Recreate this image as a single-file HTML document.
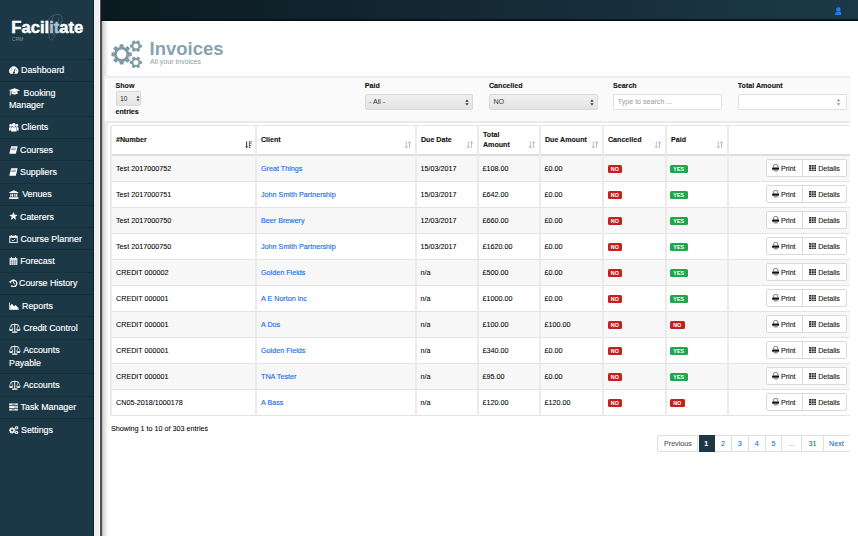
<!DOCTYPE html><html><head><meta charset="utf-8"><style>
*{margin:0;padding:0;box-sizing:border-box}
html,body{width:858px;height:536px;overflow:hidden;background:#fff;font-family:"Liberation Sans", sans-serif;color:#222}
.a{position:absolute}
#sb{left:0;top:0;width:94px;height:536px;background:#1c3846}
#sbl{left:92.8px;top:0;width:1.8px;height:536px;background:#0b2230}
#strip{left:94px;top:0;width:6px;height:536px;background:#efefef}
#strip2{left:99px;top:0;width:1px;height:536px;background:#fbfbfb}
#dl{left:100px;top:0;width:1.8px;height:536px;background:#505050}
#shadow{left:101.8px;top:20.6px;width:7.5px;height:516px;background:linear-gradient(to right,#bdbdbd,#e6e6e6 40%,#fff)}
#top{left:101px;top:0;width:757px;height:20.5px;background:linear-gradient(to right,#0c1a21,#1c3947)}
#topl{left:101px;top:19.4px;width:757px;height:1.2px;background:#06131a}
.mi{left:0;width:93px;border-top:1px solid #152e3a;color:#fff;font-size:8.85px;line-height:12.7px;-webkit-text-stroke:0.15px #fff}
.mi .t{position:absolute;left:9px;top:4.8px;width:84px}
.ic{display:inline-block;width:9px;height:8px;vertical-align:-1px;margin-right:3px}
.lbl{font-size:7.1px;font-weight:bold;color:#111;-webkit-text-stroke:0.1px #111}
.sel{border:1px solid #d8d8d8;border-radius:2px;background:linear-gradient(#f0f0f0,#e4e4e4);font-size:7.1px;color:#333;box-shadow:0 1px 0 #fff}
.inp{border:1px solid #dde3e5;border-radius:1px;background:#fff;font-size:7.1px;color:#999}
.cb{top:125px;width:1.8px;height:290.5px;background:#ebebeb}
.rowb{left:111px;width:739px;height:1px;background:#e3e3e3}
.stripe{left:111px;width:739px;height:26px;background:#f7f7f7}
.c{font-size:7.2px;color:#000;white-space:nowrap;-webkit-text-stroke:0.06px #000;transform:scaleY(1.1);transform-origin:0 6.5px}
.lk{color:#166de4;-webkit-text-stroke:0.12px #166de4}
.hd{font-size:7.1px;font-weight:bold;color:#111;line-height:10.4px;-webkit-text-stroke:0.1px #111}
.bd{width:14.5px;height:8px;border-radius:1.5px;color:#fff;font-size:5.4px;font-weight:bold;text-align:center;line-height:8.2px}
.no{background:#c3201e}
.yes{background:#20a64c}
.bg{width:80.7px;height:18px;border:1px solid #d9d9d9;border-radius:2px;background:#fff}
.bg .dv{position:absolute;left:34.7px;top:0;width:1px;height:16px;background:#d9d9d9}
.bt{position:absolute;top:5.0px;font-size:7.1px;color:#222;white-space:nowrap;-webkit-text-stroke:0.12px #222}
.pg{top:434.7px;height:17px;border:1px solid #dedede;border-left:none;font-size:7.1px;color:#1a6fd8;text-align:center;line-height:16.4px;-webkit-text-stroke:0.1px currentColor}
</style></head><body><div id="sb" class="a"></div>
<svg class="a" style="left:41px;top:10px" width="26" height="34" viewBox="0 0 26 34"><path d="M15 4.5Q20 3 21 8Q21.5 12 17 20Q13 28 11 30Q9 31 8 27Q7 22 9 15Q11 6 15 4.5Z" stroke="#3d5e6e" stroke-width="0.9" fill="none"/><path d="M17 7Q19 10 15 19Q12 26 10.5 26" stroke="#3d5e6e" stroke-width="0.8" fill="none"/><path d="M6 11Q9 6 13 5M19 24Q21 20 22 14" stroke="#3d5e6e" stroke-width="0.8" fill="none"/></svg>
<div class="a" style="left:11.3px;top:18.1px;font-size:16.6px;font-weight:bold;color:#fff;letter-spacing:0px;white-space:nowrap;-webkit-text-stroke:0.5px #fff">Facil<span style="color:#a8c6d1;-webkit-text-stroke:0.5px #a8c6d1">it</span>ate</div>

<div class="a" style="left:12px;top:36.5px;font-size:4.8px;color:#7f98a4;letter-spacing:0.2px">CRM</div>
<div class="a mi" style="top:58.50px;height:22.30px"><div class="t"><svg class="ic" style="width:9.5px;height:8px;vertical-align:-1.2px;margin-right:2.5px" viewBox="0 0 10 8.5"><path d="M1.2 8.2A4.8 4.8 0 1 1 8.8 8.2Z" fill="#fff"/><path d="M5 7.4L6.6 2.8" stroke="#1d3746" stroke-width="0.9"/><circle cx="5" cy="7.2" r="1" fill="#1d3746"/><circle cx="2.2" cy="5" r="0.5" fill="#1d3746"/><circle cx="3" cy="2.6" r="0.5" fill="#1d3746"/><circle cx="7.8" cy="5" r="0.5" fill="#1d3746"/></svg>Dashboard</div></div>
<div class="a mi" style="top:80.80px;height:34.80px"><div class="t"><svg class="ic" style="width:11px;height:8px;margin-right:3.5px;vertical-align:-0.8px" viewBox="0 0 11 8"><path d="M0 2.3L5.5 0.2L11 2.3L5.5 4.4Z" fill="#fff"/><path d="M2.4 3.5V5.8Q5.5 7.3 8.6 5.8V3.5L5.5 4.8Z" fill="#fff"/><path d="M1.3 2.6V7.6" stroke="#fff" stroke-width="0.8"/></svg>Booking<br>Manager</div></div>
<div class="a mi" style="top:115.60px;height:22.30px"><div class="t"><svg class="ic" style="width:9.6px;height:8.6px;vertical-align:-1.6px;margin-right:2.6px" viewBox="0 0 9.6 8.6"><circle cx="4.8" cy="2" r="1.9" fill="#fff"/><circle cx="1.7" cy="2.4" r="1.35" fill="#fff"/><circle cx="7.9" cy="2.4" r="1.35" fill="#fff"/><path d="M2 8.6V5.9Q2.2 4.3 3.4 4.1Q4.8 5 6.2 4.1Q7.4 4.3 7.6 5.9V8.6Z" fill="#fff"/><path d="M0 7.4V5.3Q0.2 4 1 3.9Q1.7 4.4 2.6 4.1Q1.8 4.8 1.7 6.2V7.4Z" fill="#fff"/><path d="M9.6 7.4V5.3Q9.4 4 8.6 3.9Q7.9 4.4 7 4.1Q7.8 4.8 7.9 6.2V7.4Z" fill="#fff"/></svg>Clients</div></div>
<div class="a mi" style="top:137.90px;height:22.30px"><div class="t"><svg class="ic" style="margin-right:2px" viewBox="0 0 9 8"><path d="M2.2 0.3H8.7L6.8 7.7H0.3Z" fill="#fff"/><path d="M2.6 2.2H7M2.2 3.6H6.6" stroke="#1d3746" stroke-width="0.5"/></svg>Courses</div></div>
<div class="a mi" style="top:160.20px;height:22.30px"><div class="t"><svg class="ic" style="margin-right:2px" viewBox="0 0 9 8"><path d="M2.2 0.3H8.7L6.8 7.7H0.3Z" fill="#fff"/><path d="M2.6 2.2H7M2.2 3.6H6.6" stroke="#1d3746" stroke-width="0.5"/></svg>Suppliers</div></div>
<div class="a mi" style="top:182.50px;height:22.30px"><div class="t"><svg class="ic" style="width:9.6px;height:9.4px;vertical-align:-1.8px;margin-right:3.6px" viewBox="0 0 9 8.8"><path d="M0.3 2.2L4.5 0.2L8.7 2.2V2.9H0.3Z" fill="#fff"/><path d="M1.2 3.4H2.3V6.4H1.2ZM2.9 3.4H4V6.4H2.9ZM5 3.4H6.1V6.4H5ZM6.7 3.4H7.8V6.4H6.7Z" fill="#fff"/><path d="M0.2 6.8H8.8V8.6H0.2Z" fill="#fff"/></svg>Venues</div></div>
<div class="a mi" style="top:204.80px;height:22.30px"><div class="t"><svg class="ic" style="margin-right:2px;vertical-align:-0.5px" viewBox="0 0 9 8"><path d="M4.5 0.1L5.6 2.8L8.7 2.9L6.3 4.8L7.1 7.9L4.5 6.1L1.9 7.9L2.7 4.8L0.3 2.9L3.4 2.8Z" fill="#fff"/></svg>Caterers</div></div>
<div class="a mi" style="top:227.10px;height:22.30px"><div class="t"><svg class="ic" style="margin-right:2.4px;height:8.6px;vertical-align:-1.4px" viewBox="0 0 9 8.6"><rect x="0.8" y="1.2" width="7.4" height="6.4" fill="none" stroke="#fff" stroke-width="0.9"/><path d="M0.8 1.2H8.2V2.8H0.8Z" fill="#fff"/><path d="M2.5 0V1.6M6.5 0V1.6" stroke="#fff" stroke-width="0.9"/><path d="M2.8 4.9L4 6L6.2 3.8" stroke="#fff" stroke-width="0.8" fill="none"/></svg>Course Planner</div></div>
<div class="a mi" style="top:249.40px;height:22.30px"><div class="t"><svg class="ic" style="margin-right:2.2px;height:8.6px;vertical-align:-1.4px" viewBox="0 0 9 8.6"><rect x="0.6" y="1.2" width="7.8" height="6.6" fill="#fff"/><path d="M2.5 0V1.6M6.5 0V1.6" stroke="#fff" stroke-width="0.9"/><path d="M0.6 3H8.4M0.6 4.6H8.4M0.6 6.2H8.4M2.6 3V7.8M4.5 3V7.8M6.4 3V7.8" stroke="#1d3746" stroke-width="0.35"/></svg>Forecast</div></div>
<div class="a mi" style="top:271.70px;height:22.30px"><div class="t"><svg class="ic" style="margin-right:1px" viewBox="0 0 9 8"><path d="M1.8 2.8A3.2 3.2 0 1 1 2.2 6.5" fill="none" stroke="#fff" stroke-width="1.3"/><path d="M0 2.2L2.6 2.4L1.4 4.6Z" fill="#fff"/><path d="M4.6 2V4.2L6 5.2" stroke="#fff" stroke-width="0.9" fill="none"/></svg>Course History</div></div>
<div class="a mi" style="top:294.00px;height:22.30px"><div class="t"><svg class="ic" style="width:10px" viewBox="0 0 10 8"><path d="M0.4 0.5V7.6H9.8" stroke="#fff" stroke-width="0.8" fill="none"/><path d="M1.2 7.2V3.5L3 1.8L5 4.2L6.6 3L9.6 6.2V7.2Z" fill="#fff"/></svg>Reports</div></div>
<div class="a mi" style="top:316.30px;height:22.30px"><div class="t"><svg class="ic" style="width:11.5px;height:10px;vertical-align:-2px;margin-right:2.7px" viewBox="0 0 12 10"><path d="M6 0.6V9M2.2 1.8Q6 0.6 9.8 1.8" stroke="#fff" stroke-width="1" fill="none"/><path d="M3.2 9.3H8.8" stroke="#fff" stroke-width="1.3"/><path d="M2.2 1.8L0.4 6.4M2.2 1.8L4 6.4M9.8 1.8L8 6.4M9.8 1.8L11.6 6.4" stroke="#fff" stroke-width="0.6" fill="none"/><path d="M0 6.2H4.4Q4.2 8.2 2.2 8.2Q0.2 8.2 0 6.2ZM7.6 6.2H12Q11.8 8.2 9.8 8.2Q7.8 8.2 7.6 6.2Z" fill="#fff"/></svg>Credit Control</div></div>
<div class="a mi" style="top:338.60px;height:34.80px"><div class="t"><svg class="ic" style="width:11.5px;height:10px;vertical-align:-2px;margin-right:2.7px" viewBox="0 0 12 10"><path d="M6 0.6V9M2.2 1.8Q6 0.6 9.8 1.8" stroke="#fff" stroke-width="1" fill="none"/><path d="M3.2 9.3H8.8" stroke="#fff" stroke-width="1.3"/><path d="M2.2 1.8L0.4 6.4M2.2 1.8L4 6.4M9.8 1.8L8 6.4M9.8 1.8L11.6 6.4" stroke="#fff" stroke-width="0.6" fill="none"/><path d="M0 6.2H4.4Q4.2 8.2 2.2 8.2Q0.2 8.2 0 6.2ZM7.6 6.2H12Q11.8 8.2 9.8 8.2Q7.8 8.2 7.6 6.2Z" fill="#fff"/></svg>Accounts<br>Payable</div></div>
<div class="a mi" style="top:373.40px;height:22.30px"><div class="t"><svg class="ic" style="width:11.5px;height:10px;vertical-align:-2px;margin-right:2.7px" viewBox="0 0 12 10"><path d="M6 0.6V9M2.2 1.8Q6 0.6 9.8 1.8" stroke="#fff" stroke-width="1" fill="none"/><path d="M3.2 9.3H8.8" stroke="#fff" stroke-width="1.3"/><path d="M2.2 1.8L0.4 6.4M2.2 1.8L4 6.4M9.8 1.8L8 6.4M9.8 1.8L11.6 6.4" stroke="#fff" stroke-width="0.6" fill="none"/><path d="M0 6.2H4.4Q4.2 8.2 2.2 8.2Q0.2 8.2 0 6.2ZM7.6 6.2H12Q11.8 8.2 9.8 8.2Q7.8 8.2 7.6 6.2Z" fill="#fff"/></svg>Accounts</div></div>
<div class="a mi" style="top:395.70px;height:22.30px"><div class="t"><svg class="ic" style="width:9px;margin-right:2.6px" viewBox="0 0 9 8"><path d="M0.2 0.4H8.8V2.2H0.2ZM0.2 3.1H8.8V4.9H0.2ZM0.2 5.8H8.8V7.6H0.2Z" fill="#fff"/><path d="M3 1.3H6.5M5.2 4H8M2.6 6.7H6" stroke="#1c3846" stroke-width="0.6"/></svg>Task Manager</div></div>
<div class="a mi" style="top:418.00px;height:22.30px"><div class="t"><svg class="ic" style="width:9.6px;height:8.6px;vertical-align:-1.4px;margin-right:2.4px" viewBox="0 0 9.6 8.6"><path d="M5.46 3.58L6.33 3.73L6.33 5.07L5.46 5.22L5.38 5.41L5.88 6.14L4.94 7.08L4.21 6.58L4.02 6.66L3.87 7.53L2.53 7.53L2.38 6.66L2.19 6.58L1.46 7.08L0.52 6.14L1.02 5.41L0.94 5.22L0.07 5.07L0.07 3.73L0.94 3.58L1.02 3.39L0.52 2.66L1.46 1.72L2.19 2.22L2.38 2.14L2.53 1.27L3.87 1.27L4.02 2.14L4.21 2.22L4.94 1.72L5.88 2.66L5.38 3.39ZM4.35 4.40A1.15 1.15 0 1 0 2.05 4.40A1.15 1.15 0 1 0 4.35 4.40ZM8.75 1.19L9.33 1.30L9.33 2.30L8.75 2.41L8.70 2.49L8.89 3.05L8.04 3.55L7.65 3.10L7.55 3.10L7.16 3.55L6.31 3.05L6.50 2.49L6.45 2.41L5.87 2.30L5.87 1.30L6.45 1.19L6.50 1.11L6.31 0.55L7.16 0.05L7.55 0.50L7.65 0.50L8.04 0.05L8.89 0.55L8.70 1.11ZM8.20 1.80A0.6 0.6 0 1 0 7.00 1.80A0.6 0.6 0 1 0 8.20 1.80ZM8.75 5.99L9.33 6.10L9.33 7.10L8.75 7.21L8.70 7.29L8.89 7.85L8.04 8.35L7.65 7.90L7.55 7.90L7.16 8.35L6.31 7.85L6.50 7.29L6.45 7.21L5.87 7.10L5.87 6.10L6.45 5.99L6.50 5.91L6.31 5.35L7.16 4.85L7.55 5.30L7.65 5.30L8.04 4.85L8.89 5.35L8.70 5.91ZM8.20 6.60A0.6 0.6 0 1 0 7.00 6.60A0.6 0.6 0 1 0 8.20 6.60Z" fill="#fff" fill-rule="evenodd"/></svg>Settings</div></div>
<div id="sbl" class="a"></div><div id="strip" class="a"></div><div id="strip2" class="a"></div><div id="dl" class="a"></div>
<div id="top" class="a"></div><div id="topl" class="a"></div>
<div id="shadow" class="a"></div>
<svg class="a" style="left:834.6px;top:6.8px" width="6.8" height="8.6" viewBox="0 0 6.8 8.6"><circle cx="3.4" cy="2.5" r="2.3" fill="#1b7ff2"/><path d="M0.1 8.5V7Q0.3 5.1 2 4.7Q3.4 5.5 4.8 4.7Q6.5 5.1 6.7 7V8.5Z" fill="#1b7ff2"/></svg>
<svg class="a" style="left:108px;top:38px" width="40" height="34" viewBox="0 0 40 34"><path d="M20.87 14.18L23.74 14.61L23.74 18.19L20.87 18.62L20.31 19.97L22.04 22.31L19.51 24.84L17.17 23.11L15.82 23.67L15.39 26.54L11.81 26.54L11.38 23.67L10.03 23.11L7.69 24.84L5.16 22.31L6.89 19.97L6.33 18.62L3.46 18.19L3.46 14.61L6.33 14.18L6.89 12.83L5.16 10.49L7.69 7.96L10.03 9.69L11.38 9.13L11.81 6.26L15.39 6.26L15.82 9.13L17.17 9.69L19.51 7.96L22.04 10.49L20.31 12.83ZM18.40 16.40A4.8 4.8 0 1 0 8.80 16.40A4.8 4.8 0 1 0 18.40 16.40ZM31.83 6.35L33.84 6.73L33.84 9.47L31.83 9.85L31.38 10.63L32.06 12.56L29.68 13.93L28.35 12.38L27.45 12.38L26.12 13.93L23.74 12.56L24.42 10.63L23.97 9.85L21.96 9.47L21.96 6.73L23.97 6.35L24.42 5.57L23.74 3.64L26.12 2.27L27.45 3.82L28.35 3.82L29.68 2.27L32.06 3.64L31.38 5.57ZM30.40 8.10A2.5 2.5 0 1 0 25.40 8.10A2.5 2.5 0 1 0 30.40 8.10ZM31.83 22.65L33.84 23.03L33.84 25.77L31.83 26.15L31.38 26.93L32.06 28.86L29.68 30.23L28.35 28.68L27.45 28.68L26.12 30.23L23.74 28.86L24.42 26.93L23.97 26.15L21.96 25.77L21.96 23.03L23.97 22.65L24.42 21.87L23.74 19.94L26.12 18.57L27.45 20.12L28.35 20.12L29.68 18.57L32.06 19.94L31.38 21.87ZM30.40 24.40A2.5 2.5 0 1 0 25.40 24.40A2.5 2.5 0 1 0 30.40 24.40Z" fill="#7d9aa6" fill-rule="evenodd"/></svg>
<div class="a" style="left:149.5px;top:37.7px;font-size:18.5px;font-weight:bold;color:#87a3ae;white-space:nowrap">Invoices</div>
<div class="a" style="left:150px;top:58.2px;font-size:7.06px;color:#8aa1ab;white-space:nowrap">All your invoices</div>
<div class="a" style="left:104px;top:75.8px;width:746px;height:47.2px;background:#fafafa;border-top:2px solid #e9eff1;border-left:1px solid #e6ecee;border-bottom:2px solid #e6ecee"></div>
<div class="a lbl" style="left:115.5px;top:81.7px">Show</div>
<div class="a sel" style="left:116px;top:91px;width:25px;height:15px"><span class="a" style="left:3.3px;top:2.8px;font-size:6.3px;color:#222">10</span><svg class="a" style="left:18.6px;top:3.3px" width="4" height="7" viewBox="0 0 4 7"><path d="M0.5 2.7L2 0.7L3.5 2.7ZM0.5 4.3L2 6.3L3.5 4.3Z" fill="#333"/></svg></div>
<div class="a lbl" style="left:115.5px;top:107.8px">entries</div>
<div class="a lbl" style="left:364.8px;top:81.7px">Paid</div>
<div class="a lbl" style="left:489px;top:81.7px">Cancelled</div>
<div class="a lbl" style="left:613px;top:81.7px">Search</div>
<div class="a lbl" style="left:737.8px;top:81.7px">Total Amount</div>
<div class="a sel" style="left:364.5px;top:93.5px;width:108.5px;height:16.5px"><span class="a" style="left:3.5px;top:3.7px;color:#333">- All -</span><svg class="a" style="left:99.5px;top:4.5px" width="4" height="7" viewBox="0 0 4 7"><path d="M0.3 2.8L2 0.6L3.7 2.8ZM0.3 4.2L2 6.4L3.7 4.2Z" fill="#333"/></svg></div>
<div class="a sel" style="left:489px;top:93.5px;width:108.5px;height:16.5px"><span class="a" style="left:3.5px;top:3.7px;color:#333">NO</span><svg class="a" style="left:99.5px;top:4.5px" width="4" height="7" viewBox="0 0 4 7"><path d="M0.3 2.8L2 0.6L3.7 2.8ZM0.3 4.2L2 6.4L3.7 4.2Z" fill="#333"/></svg></div>
<div class="a inp" style="left:613.3px;top:93.5px;width:109px;height:16.5px"><span class="a" style="left:3.5px;top:3.7px">Type to search ...</span></div>
<div class="a inp" style="left:737.5px;top:93.5px;width:109px;height:16.5px"><svg class="a" style="left:97.8px;top:3.6px" width="5" height="8.4" viewBox="0 0 5 8.4"><path d="M0.8 3.3L2.5 0.9L4.2 3.3ZM0.8 5.1L2.5 7.5L4.2 5.1Z" fill="none" stroke="#bbb" stroke-width="0.5"/><path d="M1.4 3L2.5 1.5L3.6 3ZM1.4 5.4L2.5 6.9L3.6 5.4Z" fill="#666"/></svg></div>
<div class="a stripe" style="top:155.50px"></div>
<div class="a stripe" style="top:207.50px"></div>
<div class="a stripe" style="top:259.50px"></div>
<div class="a stripe" style="top:311.50px"></div>
<div class="a stripe" style="top:363.50px"></div>
<div class="a" style="left:111px;top:125px;width:739px;height:1px;background:#e6e6e6"></div>
<div class="a" style="left:111px;top:154.2px;width:739px;height:1.8px;background:#dcdcdc"></div>
<div class="a rowb" style="top:181.00px"></div>
<div class="a rowb" style="top:207.00px"></div>
<div class="a rowb" style="top:233.00px"></div>
<div class="a rowb" style="top:259.00px"></div>
<div class="a rowb" style="top:285.00px"></div>
<div class="a rowb" style="top:311.00px"></div>
<div class="a rowb" style="top:337.00px"></div>
<div class="a rowb" style="top:363.00px"></div>
<div class="a rowb" style="top:389.00px"></div>
<div class="a rowb" style="top:415.00px"></div>
<div class="a cb" style="left:110.1px"></div>
<div class="a cb" style="left:255.1px"></div>
<div class="a cb" style="left:415.1px"></div>
<div class="a cb" style="left:477.1px"></div>
<div class="a cb" style="left:539.1px"></div>
<div class="a cb" style="left:602.1px"></div>
<div class="a cb" style="left:665.1px"></div>
<div class="a cb" style="left:727.1px"></div>
<div class="a hd" style="left:116px;top:134.7px">#Number</div>
<svg class="a" style="left:243.9px;top:140.6px" width="8" height="8" viewBox="0 0 8 8"><path d="M2.6 0.4V6" stroke="#444" stroke-width="1.1"/><path d="M1.1 5.2H4.1L2.6 7.4Z" fill="#444"/><path d="M5.4 0.5V7.4" stroke="#555" stroke-width="0.9"/><path d="M5 0.9H8M5 2.7H7.5M5 4.5H7M5 6.3H6.5" stroke="#666" stroke-width="0.9"/></svg>
<div class="a hd" style="left:261px;top:134.7px">Client</div>
<svg class="a" style="left:403.9px;top:140.6px" width="8" height="7.6" viewBox="0 0 8 8"><path d="M2.2 0.5V7.2M0.7 5.6L2.2 7.5L3.7 5.6" stroke="#bbb" stroke-width="1" fill="none"/><path d="M5.6 7.5V0.8M4.1 2.4L5.6 0.5L7.1 2.4" stroke="#bbb" stroke-width="1" fill="none"/></svg>
<div class="a hd" style="left:421px;top:134.7px">Due Date</div>
<svg class="a" style="left:465.9px;top:140.6px" width="8" height="7.6" viewBox="0 0 8 8"><path d="M2.2 0.5V7.2M0.7 5.6L2.2 7.5L3.7 5.6" stroke="#bbb" stroke-width="1" fill="none"/><path d="M5.6 7.5V0.8M4.1 2.4L5.6 0.5L7.1 2.4" stroke="#bbb" stroke-width="1" fill="none"/></svg>
<div class="a hd" style="left:483px;top:129.5px">Total<br>Amount</div>
<svg class="a" style="left:527.9px;top:140.6px" width="8" height="7.6" viewBox="0 0 8 8"><path d="M2.2 0.5V7.2M0.7 5.6L2.2 7.5L3.7 5.6" stroke="#bbb" stroke-width="1" fill="none"/><path d="M5.6 7.5V0.8M4.1 2.4L5.6 0.5L7.1 2.4" stroke="#bbb" stroke-width="1" fill="none"/></svg>
<div class="a hd" style="left:545px;top:134.7px">Due Amount</div>
<svg class="a" style="left:590.9px;top:140.6px" width="8" height="7.6" viewBox="0 0 8 8"><path d="M2.2 0.5V7.2M0.7 5.6L2.2 7.5L3.7 5.6" stroke="#bbb" stroke-width="1" fill="none"/><path d="M5.6 7.5V0.8M4.1 2.4L5.6 0.5L7.1 2.4" stroke="#bbb" stroke-width="1" fill="none"/></svg>
<div class="a hd" style="left:608px;top:134.7px">Cancelled</div>
<svg class="a" style="left:653.9px;top:140.6px" width="8" height="7.6" viewBox="0 0 8 8"><path d="M2.2 0.5V7.2M0.7 5.6L2.2 7.5L3.7 5.6" stroke="#bbb" stroke-width="1" fill="none"/><path d="M5.6 7.5V0.8M4.1 2.4L5.6 0.5L7.1 2.4" stroke="#bbb" stroke-width="1" fill="none"/></svg>
<div class="a hd" style="left:671px;top:134.7px">Paid</div>
<svg class="a" style="left:715.9px;top:140.6px" width="8" height="7.6" viewBox="0 0 8 8"><path d="M2.2 0.5V7.2M0.7 5.6L2.2 7.5L3.7 5.6" stroke="#bbb" stroke-width="1" fill="none"/><path d="M5.6 7.5V0.8M4.1 2.4L5.6 0.5L7.1 2.4" stroke="#bbb" stroke-width="1" fill="none"/></svg>
<div class="a c" style="left:116px;top:164.20px">Test 2017000752</div>
<div class="a c lk" style="left:261px;top:164.20px">Great Things</div>
<div class="a c" style="left:420.5px;top:164.20px">15/03/2017</div>
<div class="a c" style="left:482.5px;top:164.20px">£108.00</div>
<div class="a c" style="left:544.5px;top:164.20px">£0.00</div>
<div class="a bd no" style="left:607.6px;top:165.00px">NO</div>
<div class="a bd yes" style="left:670px;top:165.00px;width:17.5px">YES</div>
<div class="a bg" style="left:766px;top:158.90px"><div class="dv"></div>
<svg class="a" style="left:5px;top:3.9px" width="7.4" height="8" viewBox="0 0 7 7.5"><path d="M1.5 3.2V1.7Q1.5 0.4 3.5 0.4Q5.5 0.4 5.5 1.7V3.2" stroke="#555" stroke-width="0.75" fill="none"/><path d="M0.7 3.3H6.3Q6.9 3.3 6.9 3.9V5.5H0.1V3.9Q0.1 3.3 0.7 3.3Z" fill="#111"/><path d="M1.4 5.4V6.5Q3.5 7.6 5.6 6.5V5.4Z" fill="#999"/></svg>
<span class="bt" style="left:14px">Print</span>
<svg class="a" style="left:41.8px;top:5.2px" width="7.4" height="6.2" viewBox="0 0 7.4 6.2"><path d="M0 0H2.1V1.8H0ZM0 2.2H2.1V4H0ZM0 4.4H2.1V6.2H0ZM2.6 0H4.7V1.8H2.6ZM2.6 2.2H4.7V4H2.6ZM2.6 4.4H4.7V6.2H2.6ZM5.2 0H7.4V1.8H5.2ZM5.2 2.2H7.4V4H5.2ZM5.2 4.4H7.4V6.2H5.2Z" fill="#333"/></svg>
<span class="bt" style="left:51.2px">Details</span></div>
<div class="a c" style="left:116px;top:190.20px">Test 2017000751</div>
<div class="a c lk" style="left:261px;top:190.20px">John Smith Partnership</div>
<div class="a c" style="left:420.5px;top:190.20px">15/03/2017</div>
<div class="a c" style="left:482.5px;top:190.20px">£642.00</div>
<div class="a c" style="left:544.5px;top:190.20px">£0.00</div>
<div class="a bd no" style="left:607.6px;top:191.00px">NO</div>
<div class="a bd yes" style="left:670px;top:191.00px;width:17.5px">YES</div>
<div class="a bg" style="left:766px;top:184.90px"><div class="dv"></div>
<svg class="a" style="left:5px;top:3.9px" width="7.4" height="8" viewBox="0 0 7 7.5"><path d="M1.5 3.2V1.7Q1.5 0.4 3.5 0.4Q5.5 0.4 5.5 1.7V3.2" stroke="#555" stroke-width="0.75" fill="none"/><path d="M0.7 3.3H6.3Q6.9 3.3 6.9 3.9V5.5H0.1V3.9Q0.1 3.3 0.7 3.3Z" fill="#111"/><path d="M1.4 5.4V6.5Q3.5 7.6 5.6 6.5V5.4Z" fill="#999"/></svg>
<span class="bt" style="left:14px">Print</span>
<svg class="a" style="left:41.8px;top:5.2px" width="7.4" height="6.2" viewBox="0 0 7.4 6.2"><path d="M0 0H2.1V1.8H0ZM0 2.2H2.1V4H0ZM0 4.4H2.1V6.2H0ZM2.6 0H4.7V1.8H2.6ZM2.6 2.2H4.7V4H2.6ZM2.6 4.4H4.7V6.2H2.6ZM5.2 0H7.4V1.8H5.2ZM5.2 2.2H7.4V4H5.2ZM5.2 4.4H7.4V6.2H5.2Z" fill="#333"/></svg>
<span class="bt" style="left:51.2px">Details</span></div>
<div class="a c" style="left:116px;top:216.20px">Test 2017000750</div>
<div class="a c lk" style="left:261px;top:216.20px">Beer Brewery</div>
<div class="a c" style="left:420.5px;top:216.20px">12/03/2017</div>
<div class="a c" style="left:482.5px;top:216.20px">£660.00</div>
<div class="a c" style="left:544.5px;top:216.20px">£0.00</div>
<div class="a bd no" style="left:607.6px;top:217.00px">NO</div>
<div class="a bd yes" style="left:670px;top:217.00px;width:17.5px">YES</div>
<div class="a bg" style="left:766px;top:210.90px"><div class="dv"></div>
<svg class="a" style="left:5px;top:3.9px" width="7.4" height="8" viewBox="0 0 7 7.5"><path d="M1.5 3.2V1.7Q1.5 0.4 3.5 0.4Q5.5 0.4 5.5 1.7V3.2" stroke="#555" stroke-width="0.75" fill="none"/><path d="M0.7 3.3H6.3Q6.9 3.3 6.9 3.9V5.5H0.1V3.9Q0.1 3.3 0.7 3.3Z" fill="#111"/><path d="M1.4 5.4V6.5Q3.5 7.6 5.6 6.5V5.4Z" fill="#999"/></svg>
<span class="bt" style="left:14px">Print</span>
<svg class="a" style="left:41.8px;top:5.2px" width="7.4" height="6.2" viewBox="0 0 7.4 6.2"><path d="M0 0H2.1V1.8H0ZM0 2.2H2.1V4H0ZM0 4.4H2.1V6.2H0ZM2.6 0H4.7V1.8H2.6ZM2.6 2.2H4.7V4H2.6ZM2.6 4.4H4.7V6.2H2.6ZM5.2 0H7.4V1.8H5.2ZM5.2 2.2H7.4V4H5.2ZM5.2 4.4H7.4V6.2H5.2Z" fill="#333"/></svg>
<span class="bt" style="left:51.2px">Details</span></div>
<div class="a c" style="left:116px;top:242.20px">Test 2017000750</div>
<div class="a c lk" style="left:261px;top:242.20px">John Smith Partnership</div>
<div class="a c" style="left:420.5px;top:242.20px">15/03/2017</div>
<div class="a c" style="left:482.5px;top:242.20px">£1620.00</div>
<div class="a c" style="left:544.5px;top:242.20px">£0.00</div>
<div class="a bd no" style="left:607.6px;top:243.00px">NO</div>
<div class="a bd yes" style="left:670px;top:243.00px;width:17.5px">YES</div>
<div class="a bg" style="left:766px;top:236.90px"><div class="dv"></div>
<svg class="a" style="left:5px;top:3.9px" width="7.4" height="8" viewBox="0 0 7 7.5"><path d="M1.5 3.2V1.7Q1.5 0.4 3.5 0.4Q5.5 0.4 5.5 1.7V3.2" stroke="#555" stroke-width="0.75" fill="none"/><path d="M0.7 3.3H6.3Q6.9 3.3 6.9 3.9V5.5H0.1V3.9Q0.1 3.3 0.7 3.3Z" fill="#111"/><path d="M1.4 5.4V6.5Q3.5 7.6 5.6 6.5V5.4Z" fill="#999"/></svg>
<span class="bt" style="left:14px">Print</span>
<svg class="a" style="left:41.8px;top:5.2px" width="7.4" height="6.2" viewBox="0 0 7.4 6.2"><path d="M0 0H2.1V1.8H0ZM0 2.2H2.1V4H0ZM0 4.4H2.1V6.2H0ZM2.6 0H4.7V1.8H2.6ZM2.6 2.2H4.7V4H2.6ZM2.6 4.4H4.7V6.2H2.6ZM5.2 0H7.4V1.8H5.2ZM5.2 2.2H7.4V4H5.2ZM5.2 4.4H7.4V6.2H5.2Z" fill="#333"/></svg>
<span class="bt" style="left:51.2px">Details</span></div>
<div class="a c" style="left:116px;top:268.20px">CREDIT 000002</div>
<div class="a c lk" style="left:261px;top:268.20px">Golden Fields</div>
<div class="a c" style="left:420.5px;top:268.20px">n/a</div>
<div class="a c" style="left:482.5px;top:268.20px">£500.00</div>
<div class="a c" style="left:544.5px;top:268.20px">£0.00</div>
<div class="a bd no" style="left:607.6px;top:269.00px">NO</div>
<div class="a bd yes" style="left:670px;top:269.00px;width:17.5px">YES</div>
<div class="a bg" style="left:766px;top:262.90px"><div class="dv"></div>
<svg class="a" style="left:5px;top:3.9px" width="7.4" height="8" viewBox="0 0 7 7.5"><path d="M1.5 3.2V1.7Q1.5 0.4 3.5 0.4Q5.5 0.4 5.5 1.7V3.2" stroke="#555" stroke-width="0.75" fill="none"/><path d="M0.7 3.3H6.3Q6.9 3.3 6.9 3.9V5.5H0.1V3.9Q0.1 3.3 0.7 3.3Z" fill="#111"/><path d="M1.4 5.4V6.5Q3.5 7.6 5.6 6.5V5.4Z" fill="#999"/></svg>
<span class="bt" style="left:14px">Print</span>
<svg class="a" style="left:41.8px;top:5.2px" width="7.4" height="6.2" viewBox="0 0 7.4 6.2"><path d="M0 0H2.1V1.8H0ZM0 2.2H2.1V4H0ZM0 4.4H2.1V6.2H0ZM2.6 0H4.7V1.8H2.6ZM2.6 2.2H4.7V4H2.6ZM2.6 4.4H4.7V6.2H2.6ZM5.2 0H7.4V1.8H5.2ZM5.2 2.2H7.4V4H5.2ZM5.2 4.4H7.4V6.2H5.2Z" fill="#333"/></svg>
<span class="bt" style="left:51.2px">Details</span></div>
<div class="a c" style="left:116px;top:294.20px">CREDIT 000001</div>
<div class="a c lk" style="left:261px;top:294.20px">A E Norton inc</div>
<div class="a c" style="left:420.5px;top:294.20px">n/a</div>
<div class="a c" style="left:482.5px;top:294.20px">£1000.00</div>
<div class="a c" style="left:544.5px;top:294.20px">£0.00</div>
<div class="a bd no" style="left:607.6px;top:295.00px">NO</div>
<div class="a bd yes" style="left:670px;top:295.00px;width:17.5px">YES</div>
<div class="a bg" style="left:766px;top:288.90px"><div class="dv"></div>
<svg class="a" style="left:5px;top:3.9px" width="7.4" height="8" viewBox="0 0 7 7.5"><path d="M1.5 3.2V1.7Q1.5 0.4 3.5 0.4Q5.5 0.4 5.5 1.7V3.2" stroke="#555" stroke-width="0.75" fill="none"/><path d="M0.7 3.3H6.3Q6.9 3.3 6.9 3.9V5.5H0.1V3.9Q0.1 3.3 0.7 3.3Z" fill="#111"/><path d="M1.4 5.4V6.5Q3.5 7.6 5.6 6.5V5.4Z" fill="#999"/></svg>
<span class="bt" style="left:14px">Print</span>
<svg class="a" style="left:41.8px;top:5.2px" width="7.4" height="6.2" viewBox="0 0 7.4 6.2"><path d="M0 0H2.1V1.8H0ZM0 2.2H2.1V4H0ZM0 4.4H2.1V6.2H0ZM2.6 0H4.7V1.8H2.6ZM2.6 2.2H4.7V4H2.6ZM2.6 4.4H4.7V6.2H2.6ZM5.2 0H7.4V1.8H5.2ZM5.2 2.2H7.4V4H5.2ZM5.2 4.4H7.4V6.2H5.2Z" fill="#333"/></svg>
<span class="bt" style="left:51.2px">Details</span></div>
<div class="a c" style="left:116px;top:320.20px">CREDIT 000001</div>
<div class="a c lk" style="left:261px;top:320.20px">A Dos</div>
<div class="a c" style="left:420.5px;top:320.20px">n/a</div>
<div class="a c" style="left:482.5px;top:320.20px">£100.00</div>
<div class="a c" style="left:544.5px;top:320.20px">£100.00</div>
<div class="a bd no" style="left:607.6px;top:321.00px">NO</div>
<div class="a bd no" style="left:670px;top:321.00px;width:14.5px">NO</div>
<div class="a bg" style="left:766px;top:314.90px"><div class="dv"></div>
<svg class="a" style="left:5px;top:3.9px" width="7.4" height="8" viewBox="0 0 7 7.5"><path d="M1.5 3.2V1.7Q1.5 0.4 3.5 0.4Q5.5 0.4 5.5 1.7V3.2" stroke="#555" stroke-width="0.75" fill="none"/><path d="M0.7 3.3H6.3Q6.9 3.3 6.9 3.9V5.5H0.1V3.9Q0.1 3.3 0.7 3.3Z" fill="#111"/><path d="M1.4 5.4V6.5Q3.5 7.6 5.6 6.5V5.4Z" fill="#999"/></svg>
<span class="bt" style="left:14px">Print</span>
<svg class="a" style="left:41.8px;top:5.2px" width="7.4" height="6.2" viewBox="0 0 7.4 6.2"><path d="M0 0H2.1V1.8H0ZM0 2.2H2.1V4H0ZM0 4.4H2.1V6.2H0ZM2.6 0H4.7V1.8H2.6ZM2.6 2.2H4.7V4H2.6ZM2.6 4.4H4.7V6.2H2.6ZM5.2 0H7.4V1.8H5.2ZM5.2 2.2H7.4V4H5.2ZM5.2 4.4H7.4V6.2H5.2Z" fill="#333"/></svg>
<span class="bt" style="left:51.2px">Details</span></div>
<div class="a c" style="left:116px;top:346.20px">CREDIT 000001</div>
<div class="a c lk" style="left:261px;top:346.20px">Golden Fields</div>
<div class="a c" style="left:420.5px;top:346.20px">n/a</div>
<div class="a c" style="left:482.5px;top:346.20px">£340.00</div>
<div class="a c" style="left:544.5px;top:346.20px">£0.00</div>
<div class="a bd no" style="left:607.6px;top:347.00px">NO</div>
<div class="a bd yes" style="left:670px;top:347.00px;width:17.5px">YES</div>
<div class="a bg" style="left:766px;top:340.90px"><div class="dv"></div>
<svg class="a" style="left:5px;top:3.9px" width="7.4" height="8" viewBox="0 0 7 7.5"><path d="M1.5 3.2V1.7Q1.5 0.4 3.5 0.4Q5.5 0.4 5.5 1.7V3.2" stroke="#555" stroke-width="0.75" fill="none"/><path d="M0.7 3.3H6.3Q6.9 3.3 6.9 3.9V5.5H0.1V3.9Q0.1 3.3 0.7 3.3Z" fill="#111"/><path d="M1.4 5.4V6.5Q3.5 7.6 5.6 6.5V5.4Z" fill="#999"/></svg>
<span class="bt" style="left:14px">Print</span>
<svg class="a" style="left:41.8px;top:5.2px" width="7.4" height="6.2" viewBox="0 0 7.4 6.2"><path d="M0 0H2.1V1.8H0ZM0 2.2H2.1V4H0ZM0 4.4H2.1V6.2H0ZM2.6 0H4.7V1.8H2.6ZM2.6 2.2H4.7V4H2.6ZM2.6 4.4H4.7V6.2H2.6ZM5.2 0H7.4V1.8H5.2ZM5.2 2.2H7.4V4H5.2ZM5.2 4.4H7.4V6.2H5.2Z" fill="#333"/></svg>
<span class="bt" style="left:51.2px">Details</span></div>
<div class="a c" style="left:116px;top:372.20px">CREDIT 000001</div>
<div class="a c lk" style="left:261px;top:372.20px">TNA Tester</div>
<div class="a c" style="left:420.5px;top:372.20px">n/a</div>
<div class="a c" style="left:482.5px;top:372.20px">£95.00</div>
<div class="a c" style="left:544.5px;top:372.20px">£0.00</div>
<div class="a bd no" style="left:607.6px;top:373.00px">NO</div>
<div class="a bd yes" style="left:670px;top:373.00px;width:17.5px">YES</div>
<div class="a bg" style="left:766px;top:366.90px"><div class="dv"></div>
<svg class="a" style="left:5px;top:3.9px" width="7.4" height="8" viewBox="0 0 7 7.5"><path d="M1.5 3.2V1.7Q1.5 0.4 3.5 0.4Q5.5 0.4 5.5 1.7V3.2" stroke="#555" stroke-width="0.75" fill="none"/><path d="M0.7 3.3H6.3Q6.9 3.3 6.9 3.9V5.5H0.1V3.9Q0.1 3.3 0.7 3.3Z" fill="#111"/><path d="M1.4 5.4V6.5Q3.5 7.6 5.6 6.5V5.4Z" fill="#999"/></svg>
<span class="bt" style="left:14px">Print</span>
<svg class="a" style="left:41.8px;top:5.2px" width="7.4" height="6.2" viewBox="0 0 7.4 6.2"><path d="M0 0H2.1V1.8H0ZM0 2.2H2.1V4H0ZM0 4.4H2.1V6.2H0ZM2.6 0H4.7V1.8H2.6ZM2.6 2.2H4.7V4H2.6ZM2.6 4.4H4.7V6.2H2.6ZM5.2 0H7.4V1.8H5.2ZM5.2 2.2H7.4V4H5.2ZM5.2 4.4H7.4V6.2H5.2Z" fill="#333"/></svg>
<span class="bt" style="left:51.2px">Details</span></div>
<div class="a c" style="left:116px;top:398.20px">CN05-2018/1000178</div>
<div class="a c lk" style="left:261px;top:398.20px">A Bass</div>
<div class="a c" style="left:420.5px;top:398.20px">n/a</div>
<div class="a c" style="left:482.5px;top:398.20px">£120.00</div>
<div class="a c" style="left:544.5px;top:398.20px">£120.00</div>
<div class="a bd no" style="left:607.6px;top:399.00px">NO</div>
<div class="a bd no" style="left:670px;top:399.00px;width:14.5px">NO</div>
<div class="a bg" style="left:766px;top:392.90px"><div class="dv"></div>
<svg class="a" style="left:5px;top:3.9px" width="7.4" height="8" viewBox="0 0 7 7.5"><path d="M1.5 3.2V1.7Q1.5 0.4 3.5 0.4Q5.5 0.4 5.5 1.7V3.2" stroke="#555" stroke-width="0.75" fill="none"/><path d="M0.7 3.3H6.3Q6.9 3.3 6.9 3.9V5.5H0.1V3.9Q0.1 3.3 0.7 3.3Z" fill="#111"/><path d="M1.4 5.4V6.5Q3.5 7.6 5.6 6.5V5.4Z" fill="#999"/></svg>
<span class="bt" style="left:14px">Print</span>
<svg class="a" style="left:41.8px;top:5.2px" width="7.4" height="6.2" viewBox="0 0 7.4 6.2"><path d="M0 0H2.1V1.8H0ZM0 2.2H2.1V4H0ZM0 4.4H2.1V6.2H0ZM2.6 0H4.7V1.8H2.6ZM2.6 2.2H4.7V4H2.6ZM2.6 4.4H4.7V6.2H2.6ZM5.2 0H7.4V1.8H5.2ZM5.2 2.2H7.4V4H5.2ZM5.2 4.4H7.4V6.2H5.2Z" fill="#333"/></svg>
<span class="bt" style="left:51.2px">Details</span></div>
<div class="a c" style="left:111px;top:423.5px">Showing 1 to 10 of 303 entries</div>
<div class="a pg" style="left:657.3px;width:41.200000000000045px;border-left:1px solid #dedede;border-radius:2px 0 0 2px;color:#555;">Previous</div>
<div class="a pg" style="left:698.5px;width:16.5px;background:#1d3746;border-color:#1d3746;font-weight:bold;color:#fff;">1</div>
<div class="a pg" style="left:715px;width:17px;">2</div>
<div class="a pg" style="left:732px;width:16.700000000000045px;">3</div>
<div class="a pg" style="left:748.7px;width:16.899999999999977px;">4</div>
<div class="a pg" style="left:765.6px;width:16.799999999999955px;">5</div>
<div class="a pg" style="left:782.4px;width:19.800000000000068px;color:#999;">…</div>
<div class="a pg" style="left:802.2px;width:21.399999999999977px;">31</div>
<div class="a pg" style="left:823.6px;width:46.39999999999998px;"><span style="position:absolute;left:5.5px;top:0">Next</span></div>
<div class="a" style="left:850px;top:20.6px;width:8px;height:516px;background:#fff"></div></body></html>
